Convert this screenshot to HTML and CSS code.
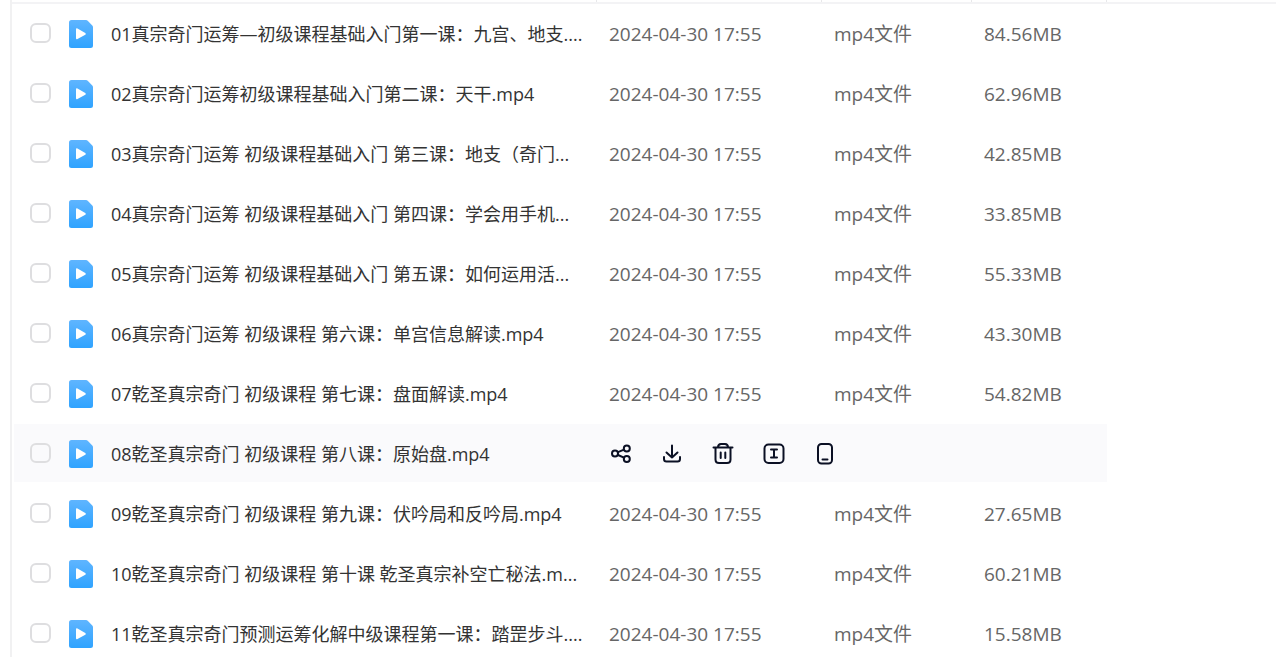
FILE: index.html
```html
<!DOCTYPE html>
<html lang="zh-CN">
<head>
    <meta charset="UTF-8">
    <meta name="viewport" content="width=device-width, initial-scale=1.0">
    <title>文件列表</title>
    <link rel="stylesheet" href="styles.css">
</head>
<body>
    <svg class="sprite" aria-hidden="true">
        <defs>
            <linearGradient id="blue" x1="0" y1="0" x2="0" y2="1">
                <stop offset="0" stop-color="#5fb5ff"/>
                <stop offset="1" stop-color="#2fa3ff"/>
            </linearGradient>
        </defs>
        <symbol id="video" viewBox="0 0 24 28">
            <path fill="url(#blue)" d="M2.500 0H17q1 0 1.700.7l4.600 4.900q.7.700.7 1.700V25.500q0 2.500-2.500 2.500h-19q-2.500 0-2.500-2.500v-23q0-2.500 2.500-2.500z"/>
            <path fill="#fff" d="M7 9.500v8.500q0 1.800 1.500 1l7.800-4.300q1.200-.9 0-1.800L8.500 8.500Q7 7.700 7 9.500z"/>
        </symbol>
    </svg>
    <main class="panel">
        <div class="columns">
            <span class="column column-name"></span>
            <span class="column column-date"></span>
            <span class="column column-type"></span>
            <span class="column column-size"></span>
        </div>
        <table class="files">
            <colgroup>
                <col>
                <col class="column-date">
                <col class="column-type">
                <col class="column-size">
            </colgroup>
            <tbody>
                <tr>
                    <td><div class="file"><input type="checkbox" class="check" id="f1"><svg class="file-icon"><use href="#video"/></svg><label class="name" for="f1">01真宗奇门运筹—初级课程基础入门第一课：九宫、地支....</label></div></td>
                    <td>2024-04-30 17:55</td>
                    <td>mp4文件</td>
                    <td>84.56MB</td>
                </tr>
                <tr>
                    <td><div class="file"><input type="checkbox" class="check" id="f2"><svg class="file-icon"><use href="#video"/></svg><label class="name" for="f2">02真宗奇门运筹初级课程基础入门第二课：天干.mp4</label></div></td>
                    <td>2024-04-30 17:55</td>
                    <td>mp4文件</td>
                    <td>62.96MB</td>
                </tr>
                <tr>
                    <td><div class="file"><input type="checkbox" class="check" id="f3"><svg class="file-icon"><use href="#video"/></svg><label class="name" for="f3">03真宗奇门运筹 初级课程基础入门 第三课：地支（奇门...</label></div></td>
                    <td>2024-04-30 17:55</td>
                    <td>mp4文件</td>
                    <td>42.85MB</td>
                </tr>
                <tr>
                    <td><div class="file"><input type="checkbox" class="check" id="f4"><svg class="file-icon"><use href="#video"/></svg><label class="name" for="f4">04真宗奇门运筹 初级课程基础入门 第四课：学会用手机...</label></div></td>
                    <td>2024-04-30 17:55</td>
                    <td>mp4文件</td>
                    <td>33.85MB</td>
                </tr>
                <tr>
                    <td><div class="file"><input type="checkbox" class="check" id="f5"><svg class="file-icon"><use href="#video"/></svg><label class="name" for="f5">05真宗奇门运筹 初级课程基础入门 第五课：如何运用活...</label></div></td>
                    <td>2024-04-30 17:55</td>
                    <td>mp4文件</td>
                    <td>55.33MB</td>
                </tr>
                <tr>
                    <td><div class="file"><input type="checkbox" class="check" id="f6"><svg class="file-icon"><use href="#video"/></svg><label class="name" for="f6">06真宗奇门运筹 初级课程 第六课：单宫信息解读.mp4</label></div></td>
                    <td>2024-04-30 17:55</td>
                    <td>mp4文件</td>
                    <td>43.30MB</td>
                </tr>
                <tr>
                    <td><div class="file"><input type="checkbox" class="check" id="f7"><svg class="file-icon"><use href="#video"/></svg><label class="name" for="f7">07乾圣真宗奇门 初级课程 第七课：盘面解读.mp4</label></div></td>
                    <td>2024-04-30 17:55</td>
                    <td>mp4文件</td>
                    <td>54.82MB</td>
                </tr>
                <tr class="active">
                    <td><div class="file"><input type="checkbox" class="check" id="f8"><svg class="file-icon"><use href="#video"/></svg><label class="name" for="f8">08乾圣真宗奇门 初级课程 第八课：原始盘.mp4</label></div></td>
                    <td colspan="3">
                        <div class="actions">
                            <button type="button" class="action" aria-label="分享">
                                <svg viewBox="0 0 24 24"><circle cx="6" cy="11.500" r="3"/><circle cx="17.800" cy="6.500" r="3"/><circle cx="17.800" cy="17" r="3"/><path d="M9 10.200l6-2.500M9 13l6 2.700"/></svg>
                            </button>
                            <button type="button" class="action" aria-label="下载">
                                <svg viewBox="0 0 24 24"><path d="M12 3.500v12M6.500 10.500l5.500 5 5.500-5M4 15v2q0 2.500 2.500 2.500h11q2.500 0 2.500-2.500v-2"/></svg>
                            </button>
                            <button type="button" class="action" aria-label="删除">
                                <svg viewBox="0 0 24 24"><path d="M2.500 5.500h19M4.500 5.500v12q0 3.500 3.500 3.500h8q3.500 0 3.500-3.500v-12M7 5.500q0-3.500 3-3.500h4q3 0 3 3.500M9.700 10.500v5.500M14.300 10.500v5.500"/></svg>
                            </button>
                            <button type="button" class="action" aria-label="重命名">
                                <svg viewBox="0 0 24 24"><rect x="2.500" y="2.500" width="19" height="18.500" rx="4"/><path d="M9 7.500h6M12 7.500v8M9 15.500h6"/></svg>
                            </button>
                            <button type="button" class="action" aria-label="发送到手机">
                                <svg viewBox="0 0 24 24"><rect x="5" y="2" width="14" height="19.500" rx="3.500"/><path d="M9.500 17.500h5"/></svg>
                            </button>
                        </div>
                    </td>
                </tr>
                <tr>
                    <td><div class="file"><input type="checkbox" class="check" id="f9"><svg class="file-icon"><use href="#video"/></svg><label class="name" for="f9">09乾圣真宗奇门 初级课程 第九课：伏吟局和反吟局.mp4</label></div></td>
                    <td>2024-04-30 17:55</td>
                    <td>mp4文件</td>
                    <td>27.65MB</td>
                </tr>
                <tr>
                    <td><div class="file"><input type="checkbox" class="check" id="f10"><svg class="file-icon"><use href="#video"/></svg><label class="name" for="f10">10乾圣真宗奇门 初级课程 第十课 乾圣真宗补空亡秘法.m...</label></div></td>
                    <td>2024-04-30 17:55</td>
                    <td>mp4文件</td>
                    <td>60.21MB</td>
                </tr>
                <tr>
                    <td><div class="file"><input type="checkbox" class="check" id="f11"><svg class="file-icon"><use href="#video"/></svg><label class="name" for="f11">11乾圣真宗奇门预测运筹化解中级课程第一课：踏罡步斗....</label></div></td>
                    <td>2024-04-30 17:55</td>
                    <td>mp4文件</td>
                    <td>15.58MB</td>
                </tr>
            </tbody>
        </table>
    </main>
</body>
</html>
```
FILE: styles.css
```css
* {
    box-sizing: border-box;
}
body {
    margin: 0;
    height: 100vh;
    overflow: hidden;
    background: #fff;
    color: #333;
    font-family: "Open Sans", "Noto Sans CJK SC", sans-serif;
    font-size: 18px;
    line-height: 24px;
}
.sprite {
    position: absolute;
    width: 0;
    height: 0;
}
.panel {
    min-height: 100vh;
    margin-left: 10px;
    border-left: 2px solid #f1f1f2;
}
.columns {
    display: flex;
    height: 4px;
    padding-right: 169px;
    border-bottom: 2px solid #f3f3f5;
}
.column {
    border-right: 1px solid #e8e8ea;
}
.column-name {
    flex: 1;
}
.column-date {
    width: 225px;
}
.column-type {
    width: 150px;
}
.column-size {
    width: 135px;
}
.files {
    width: calc(100% - 171px);
    margin-left: 2px;
    table-layout: fixed;
    border-spacing: 0;
}
.files td {
    height: 60px;
    padding: 2px 0 0 12px;
    border-bottom: 2px solid #fff;
    color: #666;
    font-size: 19px;
    white-space: nowrap;
}
.files td:first-child {
    padding-left: 16px;
}
.active {
    background: #fafafc;
}
.file {
    display: flex;
    align-items: center;
}
.check {
    appearance: none;
    flex: none;
    width: 21px;
    height: 20px;
    margin: 0 0 2px;
    border: 2px solid #dedee0;
    border-radius: 6px;
}
.check:checked {
    border-color: #2fa3ff;
    background: #2fa3ff;
}
.file-icon {
    flex: none;
    width: 24px;
    height: 28px;
    margin: 0 18px;
}
.name {
    color: #333;
    font-size: 18px;
}
.actions {
    display: flex;
    gap: 27px;
}
.action {
    width: 24px;
    height: 24px;
    padding: 0;
    border: 0;
    background: none;
    cursor: pointer;
}
.action svg {
    display: block;
    width: 24px;
    height: 24px;
    fill: none;
    stroke: #0b1024;
    stroke-width: 2;
    stroke-linecap: round;
    stroke-linejoin: round;
}
```
